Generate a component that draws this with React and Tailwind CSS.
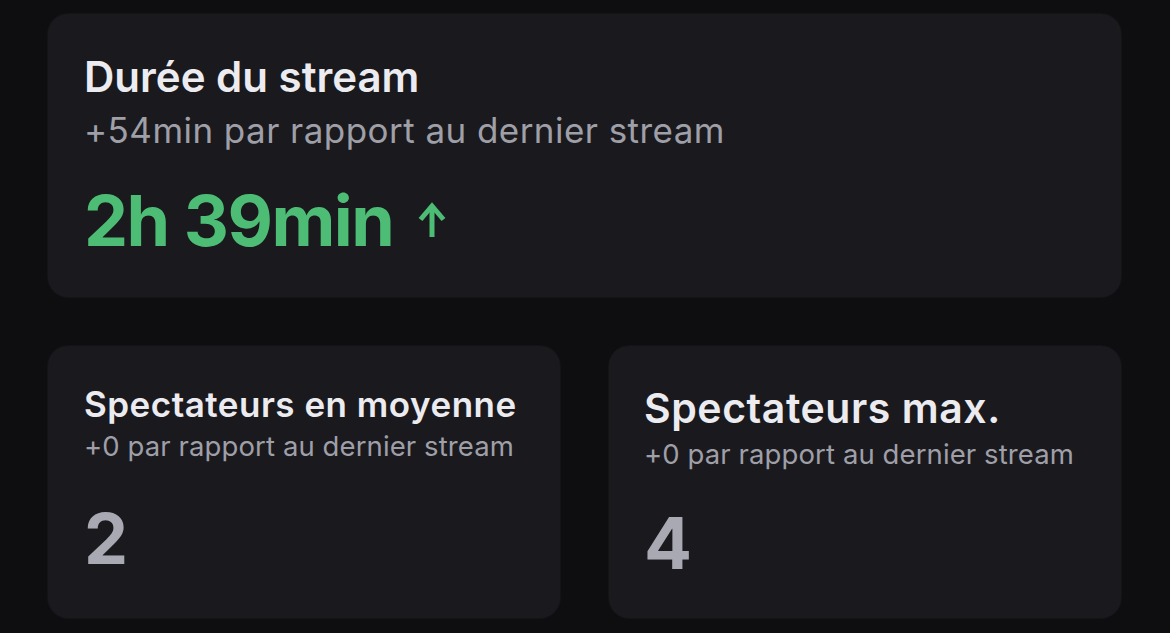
import React from "react";

const font = { fontFamily: "Inter, 'Noto Sans', sans-serif" };

function ArrowUp() {
  return (
    <svg width="30" height="36" viewBox="0 0 30 36" fill="none" className="block">
      <path d="M15 5 V36" stroke="#4dbd76" strokeWidth="5" />
      <path d="M3.5 18.5 L15 5 L26.5 18.5" stroke="#4dbd76" strokeWidth="5" strokeLinejoin="miter" />
    </svg>
  );
}

export default function App() {
  return (
    <div className="w-[1170px] h-[633px] bg-[#0e0e10] overflow-hidden" style={font}>
      <div className="flex flex-col gap-[49px] pl-[48px] pr-[49px] pt-[14px]">
        <div className="h-[283px] rounded-[20px] bg-[#1a1a1e] shadow-[0_0_0_1px_#141417] pl-[36px] pt-[42px] flex flex-col">
          <div className="text-[42px] leading-none font-semibold text-[#ececf0]">Durée du stream</div>
          <div className="mt-[15px] text-[35px] leading-none text-[#9f9fa8] tracking-[0.45px]">+54min par rapport au dernier stream</div>
          <div className="mt-[38px] flex items-center">
            <span className="text-[70px] leading-none font-bold text-[#4dbd76] tracking-[-1.5px]">2h 39min</span>
            <span className="ml-[24px] mt-[-4px]"><ArrowUp /></span>
          </div>
        </div>
        <div className="grid grid-cols-2 gap-[49px]">
          <div className="h-[272px] rounded-[20px] bg-[#1a1a1e] shadow-[0_0_0_1px_#141417] pl-[36px] pt-[41px] flex flex-col">
            <div className="text-[35px] leading-none font-semibold text-[#ececf0] tracking-[0.5px]">Spectateurs en moyenne</div>
            <div className="mt-[11px] text-[27.5px] leading-none text-[#9f9fa8] tracking-[0.1px]">+0 par rapport au dernier stream</div>
            <div className="mt-[43px] text-[70px] leading-none font-bold text-[#a9a9b3]">2</div>
          </div>
          <div className="h-[272px] rounded-[20px] bg-[#1a1a1e] shadow-[0_0_0_1px_#141417] pl-[35px] pt-[42px] flex flex-col">
            <div className="text-[41px] leading-none font-semibold text-[#ececf0] tracking-[0.55px]">Spectateurs max.</div>
            <div className="mt-[12px] text-[27.5px] leading-none text-[#9f9fa8] tracking-[0.1px]">+0 par rapport au dernier stream</div>
            <div className="mt-[39px] text-[71px] leading-none font-bold text-[#a9a9b3]">4</div>
          </div>
        </div>
      </div>
    </div>
  );
}
